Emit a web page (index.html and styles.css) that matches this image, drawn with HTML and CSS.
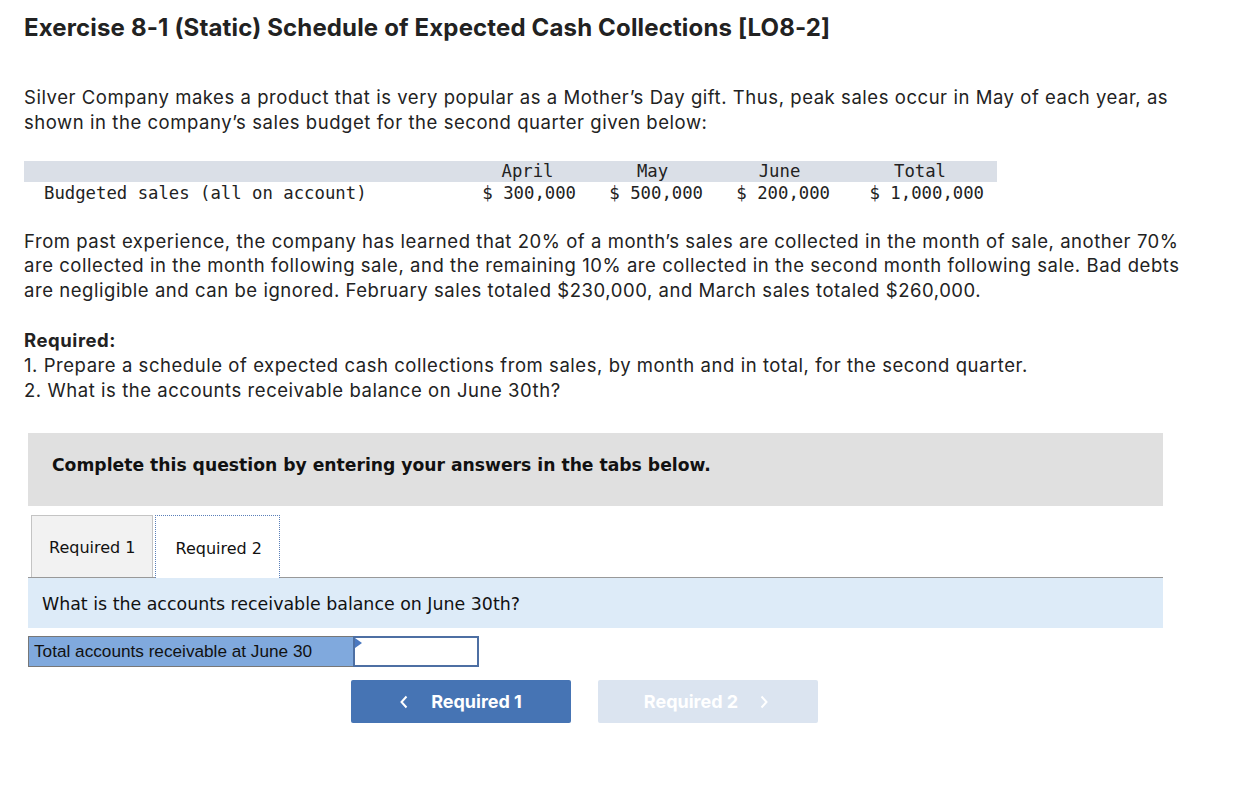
FILE: index.html
```html
<!DOCTYPE html>
<html>
<head>
<meta charset="utf-8">
<link rel="stylesheet" href="styles.css">
</head>
<body>
<div class="page">
  <h1 class="title">Exercise 8-1 (Static) Schedule of Expected Cash Collections [LO8-2]</h1>
  <p class="para p1">Silver Company makes a product that is very popular as a Mother’s Day gift. Thus, peak sales occur in May of each year, as shown in the company’s sales budget for the second quarter given below:</p>

  <div class="budget">
    <div class="brow bhead">
      <div class="blabel"></div>
      <div class="bcol">April</div>
      <div class="bcol">May</div>
      <div class="bcol">June</div>
      <div class="bcol btotal">Total</div>
    </div>
    <div class="brow bvals">
      <div class="blabel">Budgeted sales (all on account)</div>
      <div class="bcol">$ 300,000</div>
      <div class="bcol">$ 500,000</div>
      <div class="bcol">$ 200,000</div>
      <div class="bcol btotal">$ 1,000,000</div>
    </div>
  </div>

  <p class="para p2">From past experience, the company has learned that 20% of a month’s sales are collected in the month of sale, another 70% are collected in the month following sale, and the remaining 10% are collected in the second month following sale. Bad debts are negligible and can be ignored. February sales totaled $230,000, and March sales totaled $260,000.</p>

  <div class="para p3">
    <div class="req-h">Required:</div>
    <div>1. Prepare a schedule of expected cash collections from sales, by month and in total, for the second quarter.</div>
    <div>2. What is the accounts receivable balance on June 30th?</div>
  </div>

  <div class="work">
    <div class="instr">Complete this question by entering your answers in the tabs below.</div>

    <div class="tabs">
      <div class="tab">Required 1</div>
      <div class="tab active">Required 2</div>
    </div>
    <div class="question">What is the accounts receivable balance on June 30th?</div>

    <div class="answer">
      <div class="alabel">Total accounts receivable at June 30</div>
      <div class="ainput"><span class="flag"></span></div>
    </div>

    <div class="navs">
      <button class="nav prev"><svg class="chev" width="8" height="14" viewBox="0 0 8 14"><path d="M6.5 1.5 L1.5 7 L6.5 12.5" fill="none" stroke="#fff" stroke-width="2"/></svg><span>Required 1</span></button>
      <button class="nav next"><span>Required 2</span><svg class="chev" width="8" height="14" viewBox="0 0 8 14"><path d="M1.5 1.5 L6.5 7 L1.5 12.5" fill="none" stroke="#fff" stroke-width="2"/></svg></button>
    </div>
  </div>
</div>
</body>
</html>
```

FILE: styles.css
```css
* { box-sizing: border-box; }
html, body { margin: 0; padding: 0; background: #fff; }
body {
  font-family: Inter, "Open Sans", sans-serif;
  color: #222;
}
.page {
  padding: 14px 0 0 24px;
  width: 1246px;
}
.title {
  margin: 0;
  font-size: 24px;
  font-weight: 700;
  letter-spacing: 0.15px;
  line-height: 28px;
  color: #222;
}
.para {
  margin: 0;
  font-size: 18.5px;
  letter-spacing: 0.55px;
  line-height: 24.8px;
  color: #222;
}
.p1 { margin-top: 43px; width: 1170px; }
.budget {
  margin-top: 26px;
  width: 973px;
  font-family: "DejaVu Sans Mono", monospace;
  font-size: 17.3px;
  color: #222;
}
.brow {
  display: grid;
  grid-template-columns: 442px 123px 127px 127px 154px;
  height: 23px;
  align-items: center;
}
.bhead { background: #dadfe7; height: 21px; }
.bhead .bcol { text-align: center; }
.bvals .bcol { text-align: right; padding-right: 13px; }
.bvals .blabel { padding-left: 20px; }
.p2 { margin-top: 24px; width: 1165px; }
.p3 { margin-top: 25px; }
.req-h { font-weight: 700; }

.work { width: 1135px; margin-left: 4px; margin-top: 31px; }
.instr {
  background: #e0e0e0;
  height: 73px;
  padding: 0 0 10px 24px;
  display: flex;
  align-items: center;
  font-family: "DejaVu Sans", Verdana, sans-serif;
  font-weight: 700;
  font-size: 17.2px;
  color: #111;
}
.tabs {
  margin-top: 9px;
  display: flex;
  align-items: flex-end;
  padding-left: 3px;
  gap: 2px;
  border-bottom: 1px solid #999;
  height: 63px;
}
.tab {
  height: 62px;
  display: flex;
  align-items: center;
  padding: 2px 17px 0;
  font-family: "DejaVu Sans", Verdana, sans-serif;
  font-size: 16px;
  color: #111;
  background: #f2f2f2;
  border: 1px solid #c4c4c4;
  border-bottom: none;
}
.tab.active {
  background: #fff;
  border: 1px dotted #5a7fb8;
  border-bottom: none;
  height: 63px;
  margin-bottom: -1px;
  padding: 2px 17px 0 19px;
}
.question {
  background: #ddebf8;
  height: 50px;
  display: flex;
  align-items: center;
  padding: 1px 0 0 14px;
  font-family: "DejaVu Sans", Verdana, sans-serif;
  font-size: 17.4px;
  color: #111;
}
.answer {
  margin-top: 8px;
  display: flex;
  height: 31px;
}
.alabel {
  width: 326px;
  background: #80a9dd;
  border: 1px solid #777;
  display: flex;
  align-items: center;
  padding-left: 5px;
  font-family: "Liberation Sans", Arial, sans-serif;
  font-size: 17.2px;
  color: #111;
}
.ainput {
  position: relative;
  width: 126px;
  background: #fff;
  border: 2px solid #4d6fa3;
  margin-left: -1px;
}
.flag {
  position: absolute;
  left: 0;
  top: 0;
  width: 0; height: 0;
  border-top: 5px solid transparent;
  border-bottom: 5px solid transparent;
  border-left: 7px solid #4a78c0;
}
.navs {
  margin-top: 13px;
  display: flex;
  gap: 27px;
  padding-left: 323px;
}
.nav {
  width: 220px;
  height: 43px;
  border: none;
  border-radius: 2px;
  font-family: Inter, "Open Sans", sans-serif;
  font-weight: 700;
  font-size: 18px;
  color: #fff;
  display: flex;
  align-items: center;
  justify-content: center;
  gap: 23px;
  padding: 0;
}
.prev { background: #4674b4; }
.next { background: #dbe4f0; gap: 22px; padding-right: 4px; }
.chev { display: block; }
```
